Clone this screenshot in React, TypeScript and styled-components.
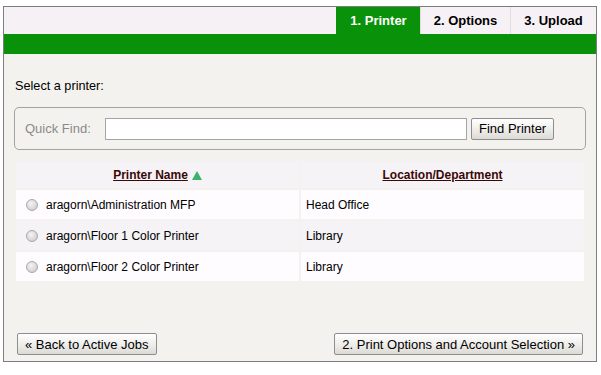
import React from "react";
import styled, {createGlobalStyle} from "styled-components";

const GlobalStyle = createGlobalStyle`
  html, body {
    margin: 0;
    padding: 0;
    background: #ffffff;
  }
  body {
    font-family: "Liberation Sans", Arial, sans-serif;
    font-size: 12px;
    color: #000000;
  }
`

const Frame = styled.div`
  box-sizing: border-box;
  width: 594px;
  height: 356px;
  margin: 6px 0 0 3px;
  border: 1px solid #7d7d7d;
  display: flex;
  flex-direction: column;
  background: #f4f2ee;
`

const TabStrip = styled.div`
  display: flex;
  justify-content: flex-end;
  height: 27px;
  background: #f6f1f5;
`

const Tab = styled.div<{active?: boolean, width: number}>`
  box-sizing: border-box;
  width: ${props => props.width}px;
  display: flex;
  align-items: center;
  justify-content: center;
  font-weight: bold;
  font-size: 13px;
  color: ${props => props.active ? "#ffffff" : "#000000"};
  background: ${props => props.active ? "#0a910a" : "transparent"};
  border-left: 1px solid ${props => props.active ? "#0a910a" : "#e2dde1"};
`

const GreenBar = styled.div`
  height: 20px;
  background: #0a910a;
`

const Content = styled.div`
  flex: 1;
  display: flex;
  flex-direction: column;
  padding: 25px 10px 6px 10px;
`

const Intro = styled.div`
  line-height: 14px;
  font-size: 12.7px;
  padding-left: 1px;
`

const FindBox = styled.div`
  box-sizing: border-box;
  height: 43px;
  margin-top: 14px;
  border: 1px solid #a3a3a3;
  border-radius: 5px;
  display: flex;
  align-items: center;
  padding: 0 10px;
`

const FindLabel = styled.span`
  width: 80px;
  font-size: 13px;
  color: #8a8a8a;
`

const FindInput = styled.input`
  box-sizing: border-box;
  width: 362px;
  height: 22px;
  border: 1px solid #a5a5a5;
  background: #ffffff;
  margin: 0 4px 0 0;
  padding: 0 3px;
  font: inherit;
`

const Button = styled.button`
  box-sizing: border-box;
  height: 22px;
  padding: 0 7px;
  border: 1px solid #8e8e8e;
  border-radius: 2px;
  background: linear-gradient(#ffffff, #ecebe8 60%, #dcdad5);
  font-family: "Liberation Sans", Arial, sans-serif;
  font-size: 13px;
  color: #000000;
  white-space: nowrap;
`

const Table = styled.table`
  margin-top: 9px;
  width: 572px;
  border-collapse: separate;
  border-spacing: 2px;
  table-layout: fixed;
`

const HeadCell = styled.th`
  height: 27px;
  padding: 0;
  background: #f5f3f5;
  text-align: center;
  vertical-align: middle;
`

const SortLink = styled.a`
  color: #3a0808;
  font-weight: bold;
  font-size: 12px;
  text-decoration: underline;
`

const SortArrow = styled.svg`
  margin-left: 4px;
  vertical-align: -1px;
`

const Row = styled.tr<{alt?: boolean}>`
  td {
    background: ${props => props.alt ? "#f5f3f5" : "#fffcff"};
  }
`

const Cell = styled.td`
  height: 29px;
  padding: 0 0 0 5px;
  vertical-align: middle;
`

const PrinterLabel = styled.label`
  display: flex;
  align-items: center;
  gap: 8px;
  padding-left: 5px;
`

const Radio = styled.span`
  box-sizing: border-box;
  width: 12px;
  height: 12px;
  border-radius: 50%;
  border: 1px solid #a9a9a9;
  background: radial-gradient(circle at 40% 35%, #f4f4f4, #d4d4d4 70%, #c2c2c2);
`

const Footer = styled.div`
  margin-top: auto;
  display: flex;
  justify-content: space-between;
  padding: 0 3px;
`

const printers = [
  {name: "aragorn\\Administration MFP", location: "Head Office"},
  {name: "aragorn\\Floor 1 Color Printer", location: "Library"},
  {name: "aragorn\\Floor 2 Color Printer", location: "Library"},
]

export default function App() {
  return (
    <>
      <GlobalStyle/>
      <Frame>
        <TabStrip>
          <Tab active width={84}>1. Printer</Tab>
          <Tab width={90}>2. Options</Tab>
          <Tab width={86}>3. Upload</Tab>
        </TabStrip>
        <GreenBar/>
        <Content>
          <Intro>Select a printer:</Intro>
          <FindBox>
            <FindLabel>Quick Find:</FindLabel>
            <FindInput type="text"/>
            <Button>Find Printer</Button>
          </FindBox>
          <Table>
            <thead>
              <tr>
                <HeadCell>
                  <SortLink>Printer Name</SortLink>
                  <SortArrow width="10" height="9" viewBox="0 0 10 9">
                    <path d="M5 0 L10 9 L0 9 Z" fill="#3cb26e"/>
                  </SortArrow>
                </HeadCell>
                <HeadCell><SortLink>Location/Department</SortLink></HeadCell>
              </tr>
            </thead>
            <tbody>
              {printers.map((p, i) => (
                <Row key={p.name} alt={i % 2 === 1}>
                  <Cell>
                    <PrinterLabel><Radio/>{p.name}</PrinterLabel>
                  </Cell>
                  <Cell>{p.location}</Cell>
                </Row>
              ))}
            </tbody>
          </Table>
          <Footer>
            <Button>« Back to Active Jobs</Button>
            <Button>2. Print Options and Account Selection »</Button>
          </Footer>
        </Content>
      </Frame>
    </>
  )
}
